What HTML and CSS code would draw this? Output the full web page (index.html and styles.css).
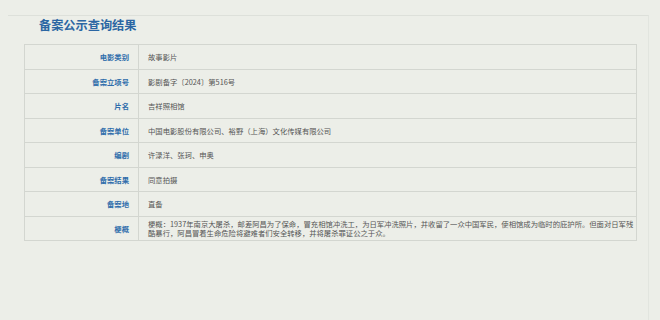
FILE: index.html
```html
<!DOCTYPE html>
<html lang="zh-CN">
<head>
<meta charset="utf-8">
<title>备案公示查询结果</title>
<link rel="stylesheet" href="styles.css">
</head>
<body>
<div class="panel">
  <h1 class="title">备案公示查询结果</h1>
  <table class="result">
    <tr><th>电影类别</th><td>故事影片</td></tr>
    <tr><th>备案立项号</th><td>影剧备字〔2024〕第516号</td></tr>
    <tr><th>片名</th><td>吉祥照相馆</td></tr>
    <tr><th>备案单位</th><td>中国电影股份有限公司、裕野（上海）文化传媒有限公司</td></tr>
    <tr><th>编剧</th><td>许渌洋、张珂、申奥</td></tr>
    <tr><th>备案结果</th><td>同意拍摄</td></tr>
    <tr><th>备案地</th><td>直备</td></tr>
    <tr class="long"><th>梗概</th><td>梗概：1937年南京大屠杀，邮差阿昌为了保命，冒充相馆冲洗工，为日军冲洗照片，并收留了一众中国军民，使相馆成为临时的庇护所。但面对日军残酷暴行，阿昌冒着生命危险将避难者们安全转移，并将屠杀罪证公之于众。</td></tr>
  </table>
</div>
</body>
</html>
```
FILE: styles.css
```css
html, body {
  margin: 0;
  padding: 0;
  background: #eceee8;
  font-family: "Noto Sans CJK SC", "Noto Sans", sans-serif;
}
.panel {
  margin: 15px 11px 0 8px;
  border-top: 1px solid #dde0da;
  border-right: 1px solid #e2e5df;
  height: 305px;
  box-sizing: border-box;
}
.title {
  margin: 0;
  padding: 1px 0 0 31px;
  height: 27px;
  font-size: 12.2px;
  line-height: 17px;
  font-weight: bold;
  color: #2b66a3;
}
.result {
  margin-left: 16px;
  width: 613px;
  border-collapse: collapse;
  font-size: 7.33px;
  border: 1px solid #cfd2cc;
}
.result tr {
  height: 24.5px;
}
.result th, .result td {
  border: 1px solid #d3d6d0;
  padding: 0;
  vertical-align: middle;
}
.result th {
  width: 104px;
  padding-right: 9px;
  text-align: right;
  font-weight: bold;
  color: #2f6dab;
}
.result td {
  padding-left: 9px;
  padding-right: 2px;
  color: #555;
  line-height: 9.5px;
}
```
